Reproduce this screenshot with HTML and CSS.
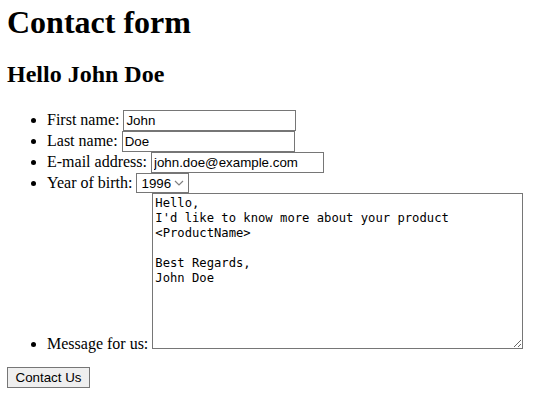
FILE: index.html
```html
<!DOCTYPE html>
<html>
<head>
<meta charset="utf-8">
<link rel="stylesheet" href="styles.css">
</head>
<body>
<h1>Contact form</h1>
<h2>Hello John Doe</h2>
<form>
<ul>
<li>First name: <input class="field" type="text" value="John"></li>
<li>Last name: <input class="field" type="text" value="Doe"></li>
<li>E-mail address: <input class="field" type="text" value="john.doe@example.com"></li>
<li>Year of birth: <select class="year"><option>1996</option></select></li>
<li>Message for us: <textarea class="msg" cols="50" rows="10">Hello,
I'd like to know more about your product &lt;ProductName&gt;

Best Regards,
John Doe</textarea></li>
</ul>
<button class="submit" type="button">Contact Us</button>
</form>
</body>
</html>
```
FILE: styles.css
```css
body {
  margin: 4px 8px 8px 7px;
  font-family: "Liberation Serif", "Times New Roman", serif;
  font-size: 16px;
  color: #000;
  background: #fff;
}
h1 {
  font-size: 32px;
  margin: 0 0 19px 0;
  line-height: 37px;
}
h2 {
  font-size: 24px;
  margin: 0 0 22px 0;
  line-height: 28px;
}
ul {
  margin: 0 0 14px 0;
  padding-left: 40px;
}
.field {
  font-family: "Liberation Sans", Arial, sans-serif;
  font-size: 13.33px;
  width: 167px;
  height: 17px;
  padding: 1px 2px;
  border: 1px solid #767676;
  box-sizing: content-box;
}
.year {
  font-family: "Liberation Sans", Arial, sans-serif;
  font-size: 13.33px;
  color: #000;
  border: 1px solid #767676;
  border-radius: 0;
  background: #fff url("data:image/svg+xml,%3Csvg xmlns='http://www.w3.org/2000/svg' width='10' height='6' viewBox='0 0 10 6'%3E%3Cpath d='M1 1l4 4 4-4' fill='none' stroke='%23808080' stroke-width='1.2'/%3E%3C/svg%3E") no-repeat right 4px center;
  -webkit-appearance: none;
  appearance: none;
  padding: 1px 16px 1px 4px;
  height: 20px;
  width: 53px;
}
.msg {
  font-family: "DejaVu Sans Mono", monospace;
  font-size: 12.2px;
  line-height: 15px;
  width: 365px;
  height: 150px;
  padding: 2px;
  border: 1px solid #767676;
  vertical-align: baseline;
  box-sizing: content-box;
}
.submit {
  font-family: "Liberation Sans", Arial, sans-serif;
  font-size: 13.33px;
  color: #000;
  background: #efefef;
  border: 1px solid #767676;
  padding: 1px 7px;
  height: 21px;
  width: 83px;
}
```
